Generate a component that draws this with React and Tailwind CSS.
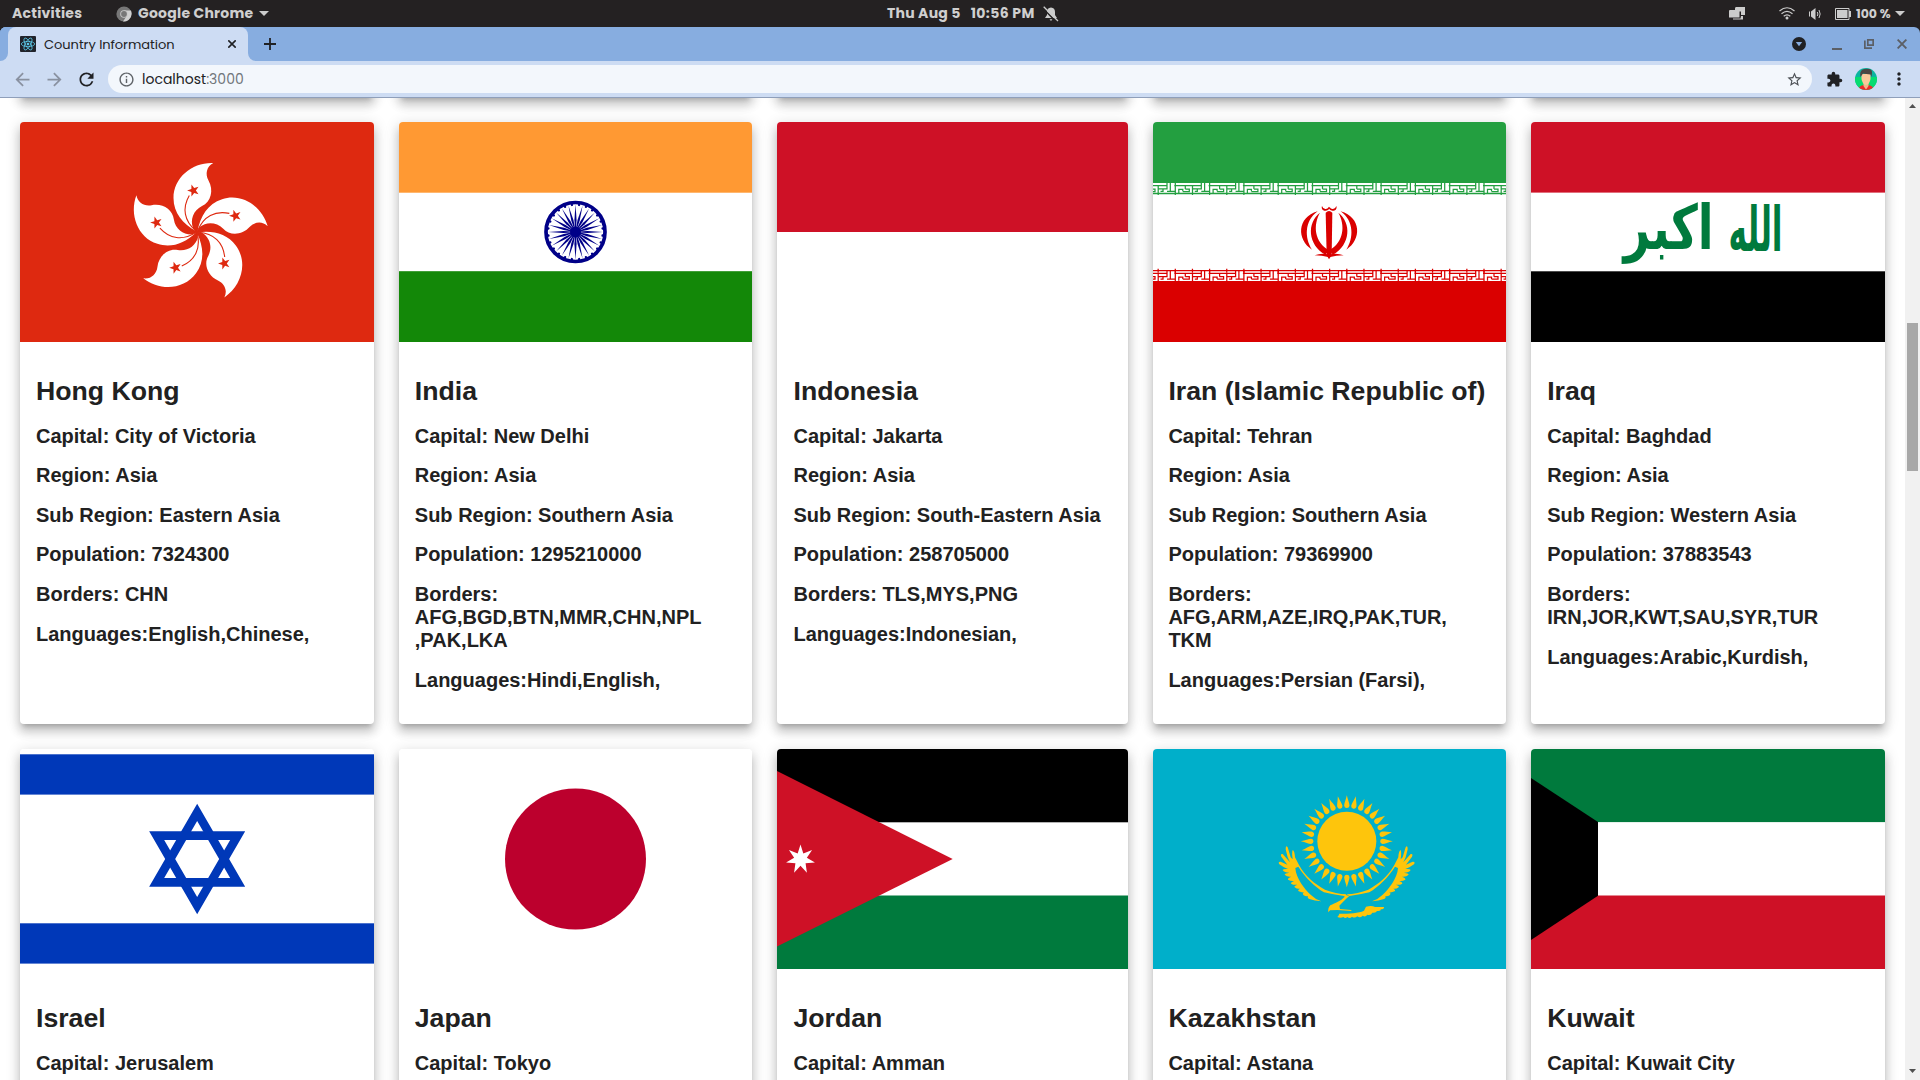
import React from "react";
import {
  MdArrowBack,
  MdArrowForward,
  MdRefresh,
  MdInfoOutline,
  MdStarBorder,
  MdExtension,
  MdMoreVert,
} from "react-icons/md";

const starPoints = (n, R, r, rot = 0) =>
  Array.from({ length: n * 2 }, (_, i) => {
    const a = (Math.PI * i) / n - Math.PI / 2 + (rot * Math.PI) / 180;
    const d = i % 2 ? r : R;
    return `${(d * Math.cos(a)).toFixed(2)},${(d * Math.sin(a)).toFixed(2)}`;
  }).join(" ");

const range = (n) => Array.from({ length: n }, (_, i) => i);

function FlagSvg({ w, children }) {
  return (
    <svg viewBox={`0 0 ${w} 220`} preserveAspectRatio="none" className="block h-full w-full">
      {children}
    </svg>
  );
}

function HongKong() {
  return (
    <FlagSvg w={354}>
      <rect width="354" height="220" fill="#DE2910" />
      <g transform="translate(177 110)">
        {range(5).map((i) => (
          <g key={i} transform={`rotate(${i * 72})`}>
            <path
              d="M-1 -1C-14 -8 -23.5 -19 -23.5 -34C-23.5 -55 -4 -70 16.3 -69C9.5 -65.500 8 -58 11.500 -51.500C17 -42 14 -30 5 -26C-4 -21.500 -7 -12 -4 -4Z"
              fill="#fff"
            />
            <path d="M-1 -1C-13 -11 -15 -24 -7.700 -36.500" fill="none" stroke="#DE2910" strokeWidth="1.100" />
            <polygon points={starPoints(5, 6.3, 2.5, -18)} transform="translate(-3.600 -41.500)" fill="#DE2910" />
          </g>
        ))}
      </g>
    </FlagSvg>
  );
}

function India() {
  return (
    <FlagSvg w={353}>
      <rect width="353" height="220" fill="#fff" />
      <rect width="353" height="70.700" fill="#FF9933" />
      <rect y="149.200" width="353" height="71" fill="#138808" />
      <g transform="translate(176.500 110)" fill="#000088">
        <circle r="29.500" fill="none" stroke="#000088" strokeWidth="3.700" />
        <circle r="5.500" />
        {range(24).map((i) => (
          <g key={i} transform={`rotate(${i * 15})`}>
            <polygon points="0,-27.500 1.100,-12 0.500,-4 -0.500,-4 -1.100,-12" />
            <circle cx="0" cy="-27.300" r="1.200" transform="rotate(7.500)" />
          </g>
        ))}
      </g>
    </FlagSvg>
  );
}

function Indonesia() {
  return (
    <FlagSvg w={351}>
      <rect width="351" height="220" fill="#fff" />
      <rect width="351" height="110" fill="#CE1126" />
    </FlagSvg>
  );
}

function Band({ color, topLine }) {
  return (
    <g stroke={color} strokeWidth="1.250" fill="none">
      {range(12).map((i) => (
        <path
          key={i}
          transform={`translate(${-12 + i * 34.3} 0)`}
          d="M0 0V12M-1 2.700H26M17.200 3V12M3.500 10V6.300H7.500V8.300M7.500 8.500H14V6H10M10 3V6M17 5.800H22V8.300H19.500M26 0V5.800H22M29.300 0V7.800M26 8.300H34.300"
        />
      ))}
      {topLine ? (
        <path d={`M0 0H353${range(24).map((i) => `M${(5.15 + i * 17.15).toFixed(2)} -2V2`).join("")}`} />
      ) : (
        <path d="M0 10.500H353" strokeWidth="1.500" />
      )}
    </g>
  );
}

function Iran() {
  return (
    <FlagSvg w={353}>
      <rect width="353" height="220" fill="#fff" />
      <rect width="353" height="61" fill="#239F40" />
      <rect y="159" width="353" height="61" fill="#DA0000" />
      <g transform="translate(0 61)">
        <Band color="#239F40" />
      </g>
      <g transform="translate(0 148.700)">
        <Band color="#DA0000" topLine />
      </g>
      <g transform="translate(-13 -12) scale(.33333)" fill="#DA0000">
        {["", "translate(1135 0) scale(-1 1)"].map((t) => (
          <g key={t} transform={t}>
            <path d="M533 304C470 322 470 390 516 419C494 385 492 334 533 304Z" />
            <path d="M540 308C500 338 503 404 556 434L568 421C522 396 519 345 540 308Z" />
            <path d="M524 436Q545 428 568 434V442Q545 436 524 436Z" />
            <path d="M546 288C543 296 549 304 558 302Q565 300 568 296L567 290Q562 298 556 297Q549 297 546 288Z" />
          </g>
        ))}
        <path d="M557 308Q567 298 577 308L575 436L567 448L560 436Z" />
      </g>
    </FlagSvg>
  );
}

function Iraq() {
  return (
    <FlagSvg w={354}>
      <rect width="354" height="220" fill="#fff" />
      <rect width="354" height="70.600" fill="#CE1126" />
      <rect y="149.300" width="354" height="71" fill="#000" />
      <g fill="#007A3D" fontFamily="DejaVu Sans" fontWeight="700" direction="rtl" textAnchor="middle">
        <text transform="translate(224.500 128.500) scale(.65 1.300)" fontSize="48">الله</text>
        <text transform="translate(137.500 127) scale(.96 1.280)" fontSize="48">اكبر</text>
      </g>
    </FlagSvg>
  );
}

function Israel() {
  return (
    <FlagSvg w={354}>
      <rect width="354" height="220" fill="#fff" />
      <rect y="5.300" width="354" height="40.300" fill="#0038B8" />
      <rect y="174.300" width="354" height="40.300" fill="#0038B8" />
      <g transform="translate(-20 -49) scale(.33333)" fill="none" stroke="#0038B8" strokeWidth="26">
        <path d="M591.500 337L713 547H470Z" />
        <path d="M591.500 617L713 407H470Z" />
      </g>
    </FlagSvg>
  );
}

function Japan() {
  return (
    <FlagSvg w={353}>
      <rect width="353" height="220" fill="#fff" />
      <circle cx="176.500" cy="110" r="70.500" fill="#BC002D" />
    </FlagSvg>
  );
}

function Jordan() {
  return (
    <FlagSvg w={351}>
      <rect width="351" height="220" fill="#fff" />
      <rect width="351" height="73.300" fill="#000" />
      <rect y="146.500" width="351" height="74" fill="#007A3D" />
      <path d="M0 22L175.700 110L0 197.500Z" fill="#CE1126" />
      <polygon points={starPoints(7, 14.8, 6.5)} transform="translate(23.500 110.300)" fill="#fff" />
    </FlagSvg>
  );
}

function Kazakhstan() {
  const wing =
    "M290 373C270 373 245 367 225 359C195 343 165 318 147 285L135 262Q134 243 128 240Q125 248 128 268L122 262L113 232Q107 224 107 238L113 262L120 277L98 252Q90 250 94 260L112 284L92 275Q83 274 88 283L102 292L114 297Q100 296 98 300Q103 308 118 308Q104 310 104 314Q112 322 124 320Q112 324 114 329Q122 334 132 333Q122 337 123 341Q132 346 142 344Q131 348 134 352Q142 358 150 356Q142 360 146 364Q155 368 162 367Q156 371 160 375Q168 380 174 378Q171 384 178 387Q194 393 214 394Q196 388 182 374C164 358 138 325 136 294L145 290C165 323 195 350 222 367Q250 374 282 378Z";
  return (
    <FlagSvg w={353}>
      <rect width="353" height="220" fill="#00AFCA" />
      <g transform="translate(97 21) scale(.33333)" fill="#FEC50C">
        <circle cx="290.500" cy="214" r="88.500" />
        {range(32).map((i) => (
          <path
            key={i}
            transform={`translate(290.500 214) rotate(${i * 11.25})`}
            d="M0 -138C3 -124 8 -115 8 -107Q7 -100 0 -100Q-7 -100 -8 -107C-8 -115 -3 -124 0 -138Z"
          />
        ))}
        <path d={wing} />
        <path d={wing} transform="translate(580 0) scale(-1 1)" />
        <path d="M278 372L298 378C285 388 280 396 268 407L270 417L304 420V423L262 420L240 421L235 427Q233 414 241 406C256 398 272 394 284 380Z" />
        <path d="M268 431C300 431 325 430 342 422L348 410Q365 405 375 411L402 411Q403 418 392 418Q394 424 381 423Q378 430 367 428Q363 437 352 434Q346 443 338 437Q330 445 322 439Q314 446 306 440Q299 447 292 441Q286 447 280 441Q272 445 262 441Q266 438 268 431Z" />
      </g>
    </FlagSvg>
  );
}

function Kuwait() {
  return (
    <FlagSvg w={354}>
      <rect width="354" height="220" fill="#fff" />
      <rect width="354" height="73.100" fill="#007A3D" />
      <rect y="146.500" width="354" height="74" fill="#CE1126" />
      <path d="M0 29L67 73.100V146.700L0 191Z" fill="#000" />
    </FlagSvg>
  );
}

const rowOne = [
  { flag: HongKong, name: "Hong Kong", lines: ["Capital: City of Victoria", "Region: Asia", "Sub Region: Eastern Asia", "Population: 7324300", "Borders: CHN", "Languages:English,Chinese,"] },
  { flag: India, name: "India", lines: ["Capital: New Delhi", "Region: Asia", "Sub Region: Southern Asia", "Population: 1295210000", "Borders:\nAFG,BGD,BTN,MMR,CHN,NPL\n,PAK,LKA", "Languages:Hindi,English,"] },
  { flag: Indonesia, name: "Indonesia", lines: ["Capital: Jakarta", "Region: Asia", "Sub Region: South-Eastern Asia", "Population: 258705000", "Borders: TLS,MYS,PNG", "Languages:Indonesian,"] },
  { flag: Iran, name: "Iran (Islamic Republic of)", lines: ["Capital: Tehran", "Region: Asia", "Sub Region: Southern Asia", "Population: 79369900", "Borders:\nAFG,ARM,AZE,IRQ,PAK,TUR,\nTKM", "Languages:Persian (Farsi),"] },
  { flag: Iraq, name: "Iraq", lines: ["Capital: Baghdad", "Region: Asia", "Sub Region: Western Asia", "Population: 37883543", "Borders:\nIRN,JOR,KWT,SAU,SYR,TUR", "Languages:Arabic,Kurdish,"] },
];

const rowTwo = [
  { flag: Israel, name: "Israel", lines: ["Capital: Jerusalem"] },
  { flag: Japan, name: "Japan", lines: ["Capital: Tokyo"] },
  { flag: Jordan, name: "Jordan", lines: ["Capital: Amman"] },
  { flag: Kazakhstan, name: "Kazakhstan", lines: ["Capital: Astana"] },
  { flag: Kuwait, name: "Kuwait", lines: ["Capital: Kuwait City"] },
];

const columnPadding = ["pl-4", "pl-[15.800px]", "pl-[16.500px]", "pl-[15.400px]", "pl-[16.200px]"];

const cardBox =
  "overflow-hidden rounded-[4px] bg-white shadow-[0px_5px_5px_-3px_rgba(0,0,0,0.2),0px_8px_10px_1px_rgba(0,0,0,0.14),0px_3px_14px_2px_rgba(0,0,0,0.12)]";

function Card({ country, padding }) {
  const Flag = country.flag;
  return (
    <article className={cardBox}>
      <div className="h-[220px]">
        <Flag />
      </div>
      <div className={`pt-[34px] ${padding}`}>
        <h2 className="text-[26.670px] leading-[31px] font-bold whitespace-nowrap">{country.name}</h2>
        <div className="mt-[17.600px] flex flex-col gap-[16.600px] text-[20px] leading-[23px] font-bold">
          {country.lines.map((line) => (
            <p key={line} className="whitespace-pre-line">
              {line}
            </p>
          ))}
        </div>
      </div>
    </article>
  );
}

function Caret() {
  return (
    <svg className="h-[5px] w-[10px] shrink-0" viewBox="0 0 10 5">
      <path d="M0 0H10L5 5Z" fill="#ccc" />
    </svg>
  );
}

function SystemBar() {
  return (
    <div className="flex h-[27px] items-center bg-[#242122] text-[14px] leading-[27px] font-bold whitespace-nowrap text-[#cfcfcf]">
      <div className="flex w-[887px] items-center pl-3">
        <span className="w-[104px] tracking-[0.250px]">Activities</span>
        <svg className="h-[16px] w-[16px] shrink-0" viewBox="0 0 16 16">
          <circle cx="8" cy="8" r="7.600" fill="#777" />
          <path d="M8 4.500H15Q17 10 12.500 14Q9.500 16 7 15.500L11 9.500Z" fill="#d0d0d0" />
          <circle cx="8" cy="8" r="3.800" fill="#c8c8c8" />
          <circle cx="8" cy="8" r="2.900" fill="#777" />
        </svg>
        <span className="ml-[6px] w-[121px] tracking-[0.250px]">Google Chrome</span>
        <Caret />
      </div>
      <span className="flex w-[156px] gap-[10px] tracking-[0.250px]">
        <span>Thu Aug 5</span>
        <span className="tracking-[0.380px]">10:56 PM</span>
      </span>
      <svg className="h-[16px] w-[16px] shrink-0" viewBox="0 0 16 16">
        <path d="M8 1.500Q12 1.800 12 6V9L14 12H2L4 9V6Q4 1.800 8 1.500ZM6.500 13.300H9.500L8 15Z" fill="#ccc" />
        <path d="M0 2.500L13 15.500" stroke="#242122" strokeWidth="1.500" />
        <path d="M0.700 0.700L15 15" stroke="#ccc" strokeWidth="1.300" />
      </svg>
      <div className="ml-auto flex items-center pr-[15px]">
        <svg className="h-[14px] w-[17px]" viewBox="0 0 17 14">
          <path d="M7 0H16V8H12V4.500H6V1.500Q6 0 7 0ZM1 3H10.500V10.500H0V4Q0 3 1 3ZM12 9H14V12.500H4V11.500H11.500Z" fill="#ccc" />
        </svg>
        <svg className="ml-[33px] h-[13px] w-[16px]" viewBox="0 0 16 13" fill="none" stroke="#ccc" strokeWidth="1.200">
          <path d="M0.500 4Q8 -2.500 15.500 4M2.500 6.800Q8 2 13.500 6.800M4.700 9.200Q8 6.500 11.300 9.200" />
          <circle cx="8" cy="11" r="1.500" fill="#ccc" stroke="none" />
        </svg>
        <svg className="ml-[14px] h-[12px] w-[12px]" viewBox="0 0 12 12" fill="none" stroke="#ccc">
          <path d="M2 3.500L6.500 0V12L2 8.500Z" fill="#ccc" stroke="none" />
          <path d="M0.500 3.500V8.500M8.300 4Q9.500 6 8.300 8M10 2Q12.300 6 10 10" />
        </svg>
        <svg className="ml-[14px] h-[12px] w-[16px]" viewBox="0 0 16 12">
          <path d="M0.500 0.500H14V11.500H0.500Z" fill="none" stroke="#ccc" />
          <path d="M2 2H12.500V10H2ZM14 3H16V9H14Z" fill="#ccc" />
        </svg>
        <span className="ml-[5px] w-[39px] text-[12.500px]">100 %</span>
        <Caret />
      </div>
    </div>
  );
}

function TabStrip() {
  return (
    <div className="bg-[#242122]">
      <div className="flex h-[34px] items-center rounded-t-[6px] bg-[#87ADE0]">
        <span className="flex h-full w-2 flex-col justify-end rounded-tl-[6px] bg-[linear-gradient(#87ADE0_50%,#CDDCF3_50%)]">
          <span className="h-full rounded-tl-[6px] rounded-br-[8px] bg-[#87ADE0]" />
        </span>
        <div className="h-full w-[240px] bg-[#87ADE0]">
          <div className="flex h-full items-center rounded-t-[8px] bg-[#CDDCF3] pr-3 pl-3">
            <svg className="h-4 w-4 shrink-0" viewBox="0 0 16 16">
              <rect width="16" height="16" rx="1" fill="#20232a" />
              <g fill="none" stroke="#61dafb" strokeWidth="0.700" transform="translate(8 8)">
                <ellipse rx="6.700" ry="2.600" />
                <ellipse rx="6.700" ry="2.600" transform="rotate(60)" />
                <ellipse rx="6.700" ry="2.600" transform="rotate(120)" />
                <circle r="1" fill="#61dafb" />
              </g>
            </svg>
            <span className="ml-2 pt-[2px] text-[13px] tracking-[-0.030px] whitespace-nowrap text-[#202124]">Country Information</span>
            <svg className="ml-auto h-2 w-2" viewBox="0 0 8 8">
              <path d="M0.300 0.300L7.700 7.700M7.700 0.300L0.300 7.700" stroke="#202124" strokeWidth="1.600" />
            </svg>
          </div>
        </div>
        <span className="h-full w-2 bg-[linear-gradient(#87ADE0_50%,#CDDCF3_50%)]">
          <span className="block h-full rounded-bl-[8px] bg-[#87ADE0]" />
        </span>
        <svg className="ml-2 h-3 w-3" viewBox="0 0 12 12">
          <path d="M0 6H12M6 0V12" stroke="#202124" strokeWidth="1.800" />
        </svg>
        <div className="ml-auto flex items-center pr-[13px]">
          <svg className="h-[14px] w-[14px]" viewBox="0 0 14 14">
            <circle cx="7" cy="7" r="7" fill="#202124" />
            <path d="M3.800 5H10.200L7 9.300Z" fill="#87ADE0" />
          </svg>
          <span className="mt-[9px] ml-[26px] h-[2px] w-[10px] bg-[#5b5f66]" />
          <svg className="ml-[22px] h-[10px] w-[10px]" viewBox="0 0 10 10" fill="none" stroke="#5b5f66" strokeWidth="1.700">
            <path d="M3.800 0.850H9.150V6.200H3.800ZM0.850 1.500V9.150H8" />
          </svg>
          <svg className="ml-[23px] h-[10px] w-[10px]" viewBox="0 0 10 10">
            <path d="M0.600 0.600L9.400 9.400M9.400 0.600L0.600 9.400" stroke="#5b5f66" strokeWidth="1.900" />
          </svg>
        </div>
      </div>
    </div>
  );
}

function Toolbar() {
  return (
    <div className="flex h-[37px] items-center border-b border-[#8f9fba] bg-[#CDDCF3]">
      <MdArrowBack className="ml-[11.500px] shrink-0 text-[#8991a0]" size={21} />
      <MdArrowForward className="ml-[11px] shrink-0 text-[#8991a0]" size={21} />
      <MdRefresh className="ml-[11px] shrink-0 text-[#202124]" size={21} />
      <div className="ml-[11.500px] flex h-7 w-[1704px] shrink-0 items-center rounded-full bg-[#F3F7FC] pr-[9.500px] pl-[9.500px]">
        <MdInfoOutline size={17} className="text-[#5f6368]" />
        <span className="ml-[7.500px] text-[14px] text-[#202124]">
          localhost<span className="text-[#70757a]">:3000</span>
        </span>
        <MdStarBorder size={17} className="ml-auto text-[#4d5156]" />
      </div>
      <MdExtension size={17} className="ml-[14px] shrink-0 text-[#202124]" />
      <svg className="ml-[12px] h-[22px] w-[22px] shrink-0 rounded-full" viewBox="0 0 22 22">
        <rect width="22" height="22" fill="#0bb5a0" />
        <rect y="9" width="22" height="13" fill="#06dc70" />
        <path d="M3 22Q4 17.500 9 17H13Q18 17.500 19 22Z" fill="#ee2a2a" />
        <path d="M8.500 14H13.500V18L11 21.500L8.500 18Z" fill="#f0b98a" />
        <path d="M6.500 6H15.500V11Q14.500 16.500 11 17Q7.500 16.500 6.500 11Z" fill="#fac99a" />
        <path d="M5.500 9Q4 2 9.500 1Q17.500 -0.500 17 5L16.500 9L15.500 6.500Q11 6 8 5.500Z" fill="#4b4643" />
      </svg>
      <MdMoreVert size={20} className="ml-[11.500px] shrink-0 text-[#202124]" />
    </div>
  );
}

function Scrollbar() {
  return (
    <div className="flex w-[15px] flex-col items-center bg-[#f1f1f1]">
      <svg className="mt-[6px] h-[4px] w-[7px]" viewBox="0 0 7 4">
        <path d="M0 4L3.500 0L7 4Z" fill="#505050" />
      </svg>
      <div className="mt-[215px] h-[148px] w-[11px] bg-[#a8a8a8]" />
      <svg className="mt-auto mb-[7px] h-[4px] w-[7px]" viewBox="0 0 7 4">
        <path d="M0 0L3.500 4L7 0Z" fill="#505050" />
      </svg>
    </div>
  );
}

export default function App() {
  return (
    <div className="flex h-[1080px] w-[1920px] flex-col overflow-hidden bg-white">
      <header className="shrink-0 font-[Poppins,Inter,sans-serif]">
        <SystemBar />
        <TabStrip />
        <Toolbar />
      </header>
      <div className="flex min-h-0 flex-1">
        <main className="h-full flex-1 overflow-hidden font-['Liberation_Sans',Arial,sans-serif] text-[#212121]">
          <div className="-mt-[21px] ml-5 grid grid-cols-[354px_353px_351px_353px_354px] grid-rows-[20px_602px_602px] gap-[25px]">
            {range(5).map((i) => (
              <div key={i} className={cardBox} />
            ))}
            {rowOne.concat(rowTwo).map((c, i) => (
              <Card key={c.name} country={c} padding={columnPadding[i % 5]} />
            ))}
          </div>
        </main>
        <Scrollbar />
      </div>
    </div>
  );
}
